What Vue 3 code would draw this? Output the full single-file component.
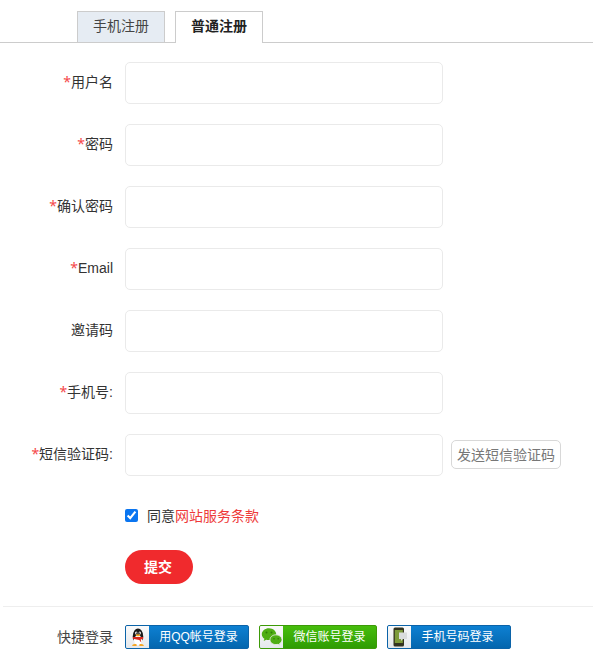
<script setup>
const fields = [
  { label: "用户名", required: true, type: "text" },
  { label: "密码", required: true, type: "password" },
  { label: "确认密码", required: true, type: "password" },
  { label: "Email", required: true, type: "text" },
  { label: "邀请码", required: false, type: "text" },
  { label: "手机号:", required: true, type: "text" },
];
</script>

<template>
  <div class="page">
    <div class="tabs">
      <a class="tab">手机注册</a>
      <a class="tab active">普通注册</a>
    </div>

    <form class="form" @submit.prevent>
      <div v-for="field in fields" :key="field.label" class="row">
        <label class="label"><i v-if="field.required">*</i>{{ field.label }}</label>
        <input class="input" :type="field.type" />
      </div>
      <div class="row">
        <label class="label"><i>*</i>短信验证码:</label>
        <input class="input" type="text" />
        <button class="sms" type="button">发送短信验证码</button>
      </div>

      <div class="agree">
        <input class="check" type="checkbox" checked />
        <span>同意<a class="terms">网站服务条款</a></span>
      </div>
      <button class="submit" type="submit">提交</button>
    </form>

    <div class="quick">
      <span class="quick__label">快捷登录</span>
      <a class="social">
        <span class="social__icon">
          <svg width="18" height="21" viewBox="0 0 20 21">
            <ellipse cx="10" cy="9" rx="5.800" ry="8.500" fill="#1a1a1a" />
            <ellipse cx="10" cy="13.500" rx="4.600" ry="5.300" fill="#fff" />
            <ellipse cx="8" cy="5.500" rx="1.300" ry="1.700" fill="#fff" />
            <ellipse cx="12" cy="5.500" rx="1.300" ry="1.700" fill="#fff" />
            <circle cx="8.200" cy="5.700" r=".7" fill="#111" />
            <circle cx="11.800" cy="5.700" r=".7" fill="#111" />
            <ellipse cx="10" cy="8" rx="2.600" ry="1.100" fill="#f5a623" />
            <path d="M4.200 10h11.600v2L13 12.800l.6 3.200-2.200-2.800-7.200-1.400z" fill="#d9281e" />
            <path d="M3.500 20c0-2 2.600-3 5-1.800V20zM16.500 20c0-2-2.600-3-5-1.800V20z" fill="#f5a623" />
          </svg>
        </span>
        <span class="social__text">用QQ帐号登录</span>
      </a>
      <a class="social green">
        <span class="social__icon">
          <svg width="22" height="20" viewBox="0 0 22 20">
            <path d="M8 1.200c-4 0-7.200 2.700-7.200 6 0 1.900 1 3.500 2.600 4.600l-.7 2.200 2.600-1.300c.9.300 1.800.4 2.700.4 4 0 7.200-2.700 7.200-5.900S12 1.200 8 1.200z" fill="#4fae14" />
            <path d="M15 7.800c-3.300 0-6 2.200-6 4.900s2.700 4.900 6 4.900c.7 0 1.400-.1 2-.3l2 1.100-.5-1.800c1.500-.9 2.500-2.300 2.500-3.900 0-2.700-2.700-4.900-6-4.900z" fill="#4fae14" stroke="#f1f1f1" stroke-width=".8" />
            <circle cx="5.500" cy="5.600" r="1" fill="#2f7d08" />
            <circle cx="10.500" cy="5.600" r="1" fill="#2f7d08" />
            <circle cx="13" cy="11.800" r=".8" fill="#2f7d08" />
            <circle cx="17.200" cy="11.800" r=".8" fill="#2f7d08" />
          </svg>
        </span>
        <span class="social__text">微信账号登录</span>
      </a>
      <a class="social phone">
        <span class="social__icon">
          <svg width="16" height="20" viewBox="0 0 16 20">
            <rect x="1.500" y="0.500" width="10.500" height="19" rx="1.500" fill="#33331f" />
            <rect x="2.800" y="3" width="8" height="13" fill="#7d9b3a" />
            <path d="M7 5.500h8v6.500h-4l-2 2v-2H7z" fill="#d9dcdc" />
          </svg>
        </span>
        <span class="social__text">手机号码登录</span>
      </a>
    </div>
  </div>
</template>

<style>
body {
  margin: 0;
  background: #fff;
}
</style>

<style scoped>
.page {
  width: 593px;
  height: 663px;
  overflow: hidden;
  font-family: "Liberation Sans", "Noto Sans CJK SC", sans-serif;
  font-size: 14px;
  color: #333;
}

.tabs {
  display: flex;
  gap: 10px;
  height: 31px;
  padding: 11px 0 0 77px;
  border-bottom: 1px solid #ccc;
}

.tab {
  box-sizing: border-box;
  width: 88px;
  height: 31px;
  line-height: 29px;
  text-align: center;
  background: #e6ecf3;
  border: 1px solid #ccc;
  border-bottom: 0;
  color: #444;
}

.tab.active {
  height: 32px;
  background: #fff;
  color: #222;
  font-weight: 700;
}

.form {
  padding-top: 19px;
}

.row {
  display: flex;
  align-items: center;
  height: 42px;
  margin-bottom: 20px;
}

.label {
  width: 113px;
  margin-right: 12px;
  padding-bottom: 4px;
  text-align: right;
  white-space: nowrap;
}

.label i {
  color: #f5484a;
  font-family: "Noto Sans", sans-serif;
  font-style: normal;
}

.input {
  box-sizing: border-box;
  width: 318px;
  height: 42px;
  border: 1px solid #eaeaea;
  border-radius: 5px;
  background: #fff;
  outline: 0;
}

.sms {
  box-sizing: border-box;
  width: 110px;
  height: 29px;
  margin: -2px 0 0 8px;
  padding: 0;
  background: #fff;
  border: 1px solid #d8d8d8;
  border-radius: 5px;
  color: #777;
  font: inherit;
}

.agree {
  display: flex;
  align-items: center;
  height: 20px;
  margin: 29px 0 25px 125px;
}

.check {
  width: 13px;
  height: 13px;
  margin: 0 9px 0 0;
  accent-color: #0a75f0;
}

.terms {
  color: #ee3a3a;
}

.submit {
  display: block;
  width: 68px;
  height: 34px;
  margin-left: 125px;
  padding: 0 2px 3px 0;
  border: 0;
  border-radius: 17px;
  background: #f02a2d;
  color: #fff;
  font: inherit;
  font-weight: 700;
}

.quick {
  display: flex;
  align-items: center;
  gap: 10px;
  height: 24px;
  margin: 22px 0 0 3px;
  padding-top: 18px;
  border-top: 1px solid #eee;
}

.quick__label {
  width: 110px;
  margin-right: 2px;
  padding-bottom: 2px;
  text-align: right;
  color: #444;
}

.social {
  box-sizing: border-box;
  display: flex;
  width: 124px;
  height: 24px;
  border: 1px solid #0b63a8;
  border-radius: 2px;
  background: linear-gradient(#0d80d2, #0466ae);
  color: #fff;
  font-size: 12px;
  overflow: hidden;
}

.social.green {
  width: 118px;
  border-color: #3d9a08;
  background: linear-gradient(#46bd0c, #2f9c03);
}

.social.phone .social__text {
  padding-right: 6px;
}

.social__icon {
  display: flex;
  align-items: center;
  justify-content: center;
  flex: none;
  width: 23px;
  background: linear-gradient(#fafafa, #e4e8ec);
}

.social__text {
  flex: 1;
  line-height: 22px;
  text-align: center;
  white-space: nowrap;
}
</style>
